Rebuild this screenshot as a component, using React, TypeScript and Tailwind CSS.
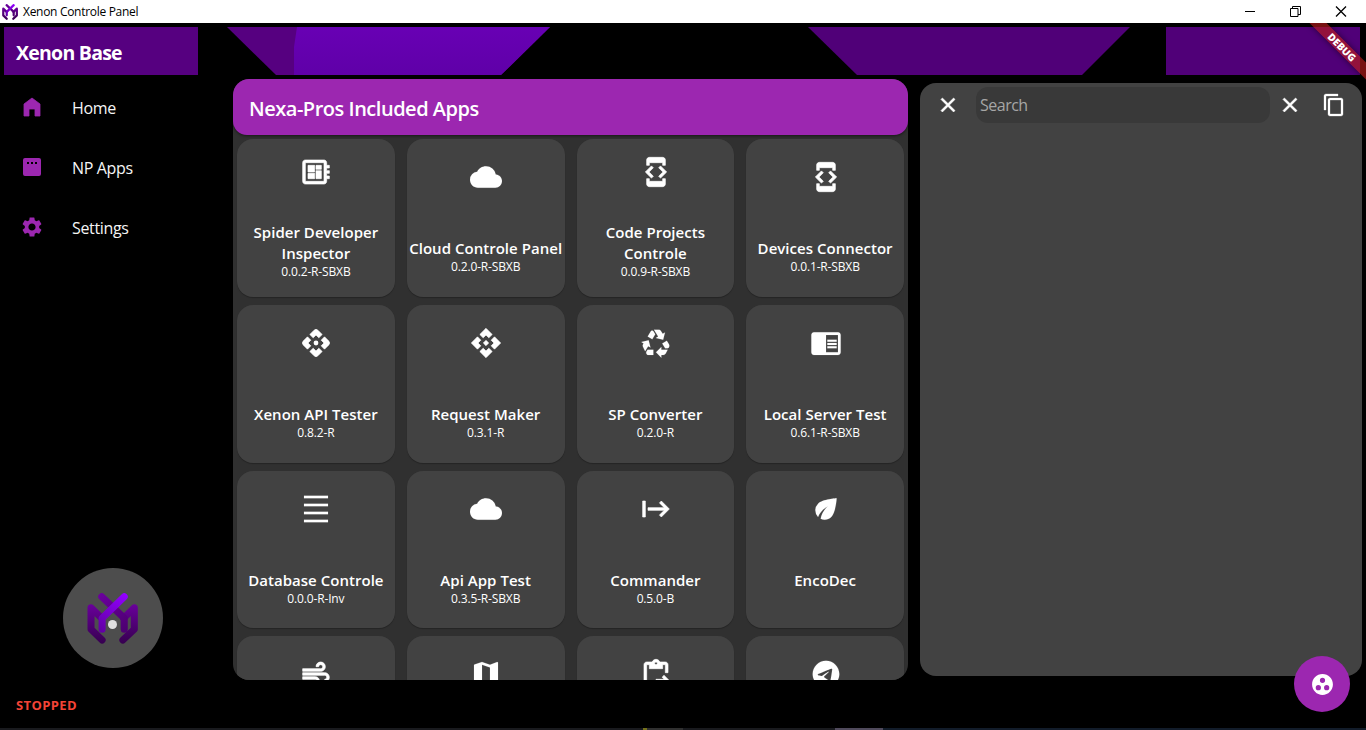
import type { ReactNode } from "react";
import type { IconType } from "react-icons";
import {
  MdAir,
  MdApi,
  MdChromeReaderMode,
  MdClose,
  MdCloud,
  MdContentCopy,
  MdContentPasteGo,
  MdDensitySmall,
  MdDeveloperBoard,
  MdDeveloperMode,
  MdEco,
  MdGroupWork,
  MdHomeFilled,
  MdMap,
  MdRecycling,
  MdSettings,
  MdStart,
} from "react-icons/md";

const TelegramIcon: IconType = ({ size, className }) => (
  <svg width={size} height={size} className={className} viewBox="0 0 24 24" fill="currentColor">
    <path d="M12 2C6.480 2 2 6.480 2 12s4.480 10 10 10 10-4.480 10-10S17.520 2 12 2zm4.640 6.800c-.15 1.580-.8 5.420-1.130 7.190-.14.75-.42 1-.68 1.030-.58.05-1.020-.38-1.580-.75-.88-.58-1.380-.94-2.230-1.500-.99-.65-.35-1.010.22-1.590.15-.15 2.710-2.480 2.760-2.690.01-.03.01-.12-.05-.18s-.14-.04-.21-.02c-.09.02-1.490.95-4.220 2.790-.4.27-.76.41-1.080.4-.36-.01-1.040-.2-1.550-.37-.63-.2-1.120-.31-1.080-.66.02-.18.27-.36.74-.55 2.920-1.270 4.860-2.110 5.830-2.510 2.780-1.160 3.350-1.360 3.730-1.360.08 0 .27.02.39.12.1.08.13.19.14.27-.01.06.01.24 0 .38z" />
  </svg>
);

const RoundedApiIcon: IconType = ({ size, className }) => (
  <svg width={size} height={size} className={className} viewBox="0 0 24 24" fill="currentColor" strokeLinejoin="round">
    <circle cx="12" cy="12" r="1.8" />
    <path d="M12 6l2.120 2.120 2.500-2.500-3.210-3.210a2 2 0 0 0-2.820 0L7.380 5.620l2.500 2.500L12 6zM6 12l2.120-2.120-2.500-2.500-3.210 3.210a2 2 0 0 0 0 2.820l3.210 3.210 2.500-2.500L6 12zM18 12l-2.120 2.120 2.500 2.500 3.210-3.210a2 2 0 0 0 0-2.820l-3.210-3.210-2.500 2.500L18 12zM12 18l-2.120-2.120-2.500 2.500 3.210 3.210a2 2 0 0 0 2.820 0l3.210-3.210-2.500-2.500L12 18z" />
  </svg>
);

type AppEntry = { name: string; version: string; Icon: IconType; bold?: boolean };

const apps: AppEntry[] = [
  { name: "Spider Developer Inspector", version: "0.0.2-R-SBXB", Icon: MdDeveloperBoard, bold: true },
  { name: "Cloud Controle Panel", version: "0.2.0-R-SBXB", Icon: MdCloud },
  { name: "Code Projects Controle", version: "0.0.9-R-SBXB", Icon: MdDeveloperMode, bold: true },
  { name: "Devices Connector", version: "0.0.1-R-SBXB", Icon: MdDeveloperMode, bold: true },
  { name: "Xenon API Tester", version: "0.8.2-R", Icon: RoundedApiIcon, bold: true },
  { name: "Request Maker", version: "0.3.1-R", Icon: MdApi, bold: true },
  { name: "SP Converter", version: "0.2.0-R", Icon: MdRecycling },
  { name: "Local Server Test", version: "0.6.1-R-SBXB", Icon: MdChromeReaderMode },
  { name: "Database Controle", version: "0.0.0-R-Inv", Icon: MdDensitySmall },
  { name: "Api App Test", version: "0.3.5-R-SBXB", Icon: MdCloud },
  { name: "Commander", version: "0.5.0-B", Icon: MdStart, bold: true },
  { name: "EncoDec", version: "", Icon: MdEco },
  { name: "", version: "", Icon: MdAir, bold: true },
  { name: "", version: "", Icon: MdMap },
  { name: "", version: "", Icon: MdContentPasteGo, bold: true },
  { name: "", version: "", Icon: TelegramIcon },
];

function Logo({ className, id }: { className: string; id: string }) {
  return (
    <svg viewBox="260 128 152 152" className={className} fill="none" strokeWidth="21" strokeLinecap="round" strokeLinejoin="round">
      <defs>
        <linearGradient id={`${id}-side`} gradientUnits="userSpaceOnUse" x1="0" y1="160" x2="0" y2="280">
          <stop offset="0" stopColor="#6a009c" />
          <stop offset="1" stopColor="#36004f" />
        </linearGradient>
        <linearGradient id={`${id}-back`} gradientUnits="userSpaceOnUse" x1="300" y1="135" x2="375" y2="240">
          <stop offset="0" stopColor="#6a009c" />
          <stop offset="1" stopColor="#4c0070" />
        </linearGradient>
        <linearGradient id={`${id}-front`} gradientUnits="userSpaceOnUse" x1="375" y1="135" x2="300" y2="240">
          <stop offset="0" stopColor="#9200ff" />
          <stop offset="1" stopColor="#6200a4" />
        </linearGradient>
      </defs>
      <path d="M305 268 272 236V172L304 203" stroke={`url(#${id}-side)`} />
      <path d="M367 268 401 236V172L369 203" stroke={`url(#${id}-side)`} />
      <path d="M304 139 371 203V236" stroke={`url(#${id}-back)`} />
      <path d="M371 139 305 203V236" stroke={`url(#${id}-front)`} />
    </svg>
  );
}

function TitleBar() {
  return (
    <header className="flex h-[23px] shrink-0 items-center justify-between bg-white text-black">
      <div className="flex items-center gap-[5px] pl-0.5">
        <Logo id="small" className="size-4" />
        <span className="text-[12px] leading-[23px] tracking-[-0.3px]">Xenon Controle Panel</span>
      </div>
      <div className="flex h-[21px] items-center gap-[34px] pr-[19px]">
        <svg width="11" height="11" stroke="currentColor"><path d="M0 5.5h10" /></svg>
        <svg width="11" height="11" stroke="currentColor" fill="none"><path d="M.5 2.5h7.500v8H.5zM2.500 2.500v-2h8v8H8" /></svg>
        <svg width="12" height="11" stroke="currentColor" strokeWidth="1.3"><path d="M1 .5l10 10M11 .5l-10 10" /></svg>
      </div>
    </header>
  );
}

function BannerArt() {
  return (
    <svg width="1356" height="48" className="absolute top-1 left-1">
      <defs>
        <linearGradient id="bright" x1="0" y1="0" x2="0" y2="1">
          <stop offset="0" stopColor="#6800b4" />
          <stop offset="1" stopColor="#5f00a8" />
        </linearGradient>
      </defs>
      <path d="M0 0h194v48H0z" fill="#560080" />
      <path d="M223 0h323l-49 48H272z" fill="#560080" />
      <path d="M293 0h253l-49 48H290V20z" fill="url(#bright)" />
      <path d="M804 0h322l-48 48H853z" fill="#500078" />
      <path d="M1162 0h194v48h-194z" fill="#500078" />
    </svg>
  );
}

function NavItem({ icon, label }: { icon: ReactNode; label: string }) {
  return (
    <a className="flex h-[60px] items-center gap-7 pl-5 text-[#9c27b0]">
      {icon}
      <span className="pt-0.5 text-[16px] tracking-[-0.35px] text-[#f5f5f5]">{label}</span>
    </a>
  );
}

function Sidebar() {
  return (
    <aside className="flex w-[229px] shrink-0 flex-col">
      <h1 className="relative flex h-[52px] items-center pt-2 pl-4 text-[19.5px] font-bold tracking-[-0.75px]">
        Xenon Base
      </h1>
      <nav className="pt-[2px]">
        <NavItem
          icon={<MdHomeFilled size={24} className="[&>path:not([fill=none])]:stroke-current [&>path:not([fill=none])]:stroke-[0.8px]" />}
          label="Home"
        />
        <NavItem
          icon={
            <svg width="24" height="24" fill="currentColor" fillRule="evenodd">
              <path d="M5 3h14a2 2 0 0 1 2 2v14a2 2 0 0 1-2 2H5a2 2 0 0 1-2-2V5a2 2 0 0 1 2-2zM7 7v2h2V7zM11 7v2h2V7zM15 7v2h2V7z" />
            </svg>
          }
          label="NP Apps"
        />
        <NavItem icon={<MdSettings size={24} />} label="Settings" />
      </nav>
      <div className="relative mt-auto ml-[62.5px] flex size-[100px] items-center justify-center rounded-full bg-[#4d4d4d]">
        <Logo id="large" className="size-[51px]" />
        <span className="absolute top-[52px] left-[45.5px] size-[9px] rounded-full bg-[#dedede]" />
      </div>
      <p className="mt-[26px] mb-3 pl-4 text-[13px] leading-[22px] font-bold tracking-[0.4px] text-[#f44336]">STOPPED</p>
    </aside>
  );
}

function AppCard({ name, version, Icon, bold }: AppEntry) {
  return (
    <button className="flex h-[157.75px] flex-col items-center justify-around rounded-2xl bg-[#424242] shadow-[0_1px_1px_rgba(0,0,0,0.25)]">
      <Icon
        size={32}
        className={
          bold
            ? "ml-px [&>path:not([fill=none])]:stroke-current [&>path:not([fill=none])]:stroke-[0.5px]"
            : "ml-px [&>path:not([fill=none])]:stroke-current [&>path:not([fill=none])]:stroke-[0.1px]"
        }
      />
      <span className="mt-[0.5px] -mb-[0.5px] flex w-full flex-col">
        <span className="min-h-[21px] text-[15px] leading-[21px] font-semibold tracking-[0.03px]">{name}</span>
        <span className="h-4 text-[12px] leading-4 tracking-[-0.15px]">{version}</span>
      </span>
    </button>
  );
}

function AppsPanel() {
  return (
    <section className="mt-14 ml-1 flex h-[601px] w-[675px] shrink-0 flex-col overflow-hidden rounded-2xl bg-[#303030]">
      <h2 className="z-10 flex h-14 shrink-0 items-center rounded-[14px] bg-[#9c27b0] px-4 pt-1 text-[20px] font-semibold tracking-[-0.48px] shadow-[0_1px_3px_rgba(0,0,0,0.5)]">
        Nexa-Pros Included Apps
      </h2>
      <div className="grid grid-cols-4 gap-x-3 gap-y-2 p-1">
        {apps.map((app, i) => (
          <AppCard key={i} {...app} />
        ))}
      </div>
    </section>
  );
}

function SearchPanel() {
  return (
    <section className="mt-[60px] ml-3 h-[593px] w-[442px] rounded-2xl bg-[#424242] pt-1">
      <div className="flex h-9 items-center">
        <MdClose size={24} className="ml-4 shrink-0 [&>path:not([fill=none])]:stroke-current [&>path:not([fill=none])]:stroke-[0.6px]" />
        <input
          placeholder="Search"
          className="ml-4 h-9 w-[294px] rounded-xl bg-[#393939] px-1 text-[16px] tracking-[-0.5px] placeholder:text-[#a6a6a6]"
        />
        <MdClose size={24} className="ml-2 shrink-0 [&>path:not([fill=none])]:stroke-current [&>path:not([fill=none])]:stroke-[0.6px]" />
        <MdContentCopy size={24} className="ml-5 shrink-0 [&>path:not([fill=none])]:stroke-current [&>path:not([fill=none])]:stroke-[0.3px]" />
      </div>
    </section>
  );
}

export default function App() {
  return (
    <div className="flex h-[730px] w-[1366px] flex-col overflow-hidden bg-black font-['Open_Sans','Noto_Sans',sans-serif] text-white">
      <TitleBar />
      <main className="relative flex h-[705px] shrink-0">
        <BannerArt />
        <Sidebar />
        <AppsPanel />
        <SearchPanel />
        <button className="absolute top-[633px] left-[1294px] flex size-14 items-center justify-center rounded-full bg-[#9c27b0]">
          <MdGroupWork size={25} />
        </button>
        <div className="absolute top-0 right-0 size-[60px] overflow-hidden">
          <div className="absolute top-[18px] -left-1 h-3 w-20 rotate-45 bg-[#b71c1c]/65 text-center text-[10.2px] leading-3 font-black shadow-[0_0_6px_rgba(0,0,0,0.5)]">
            DEBUG
          </div>
        </div>
      </main>
      <footer className="flex h-0.5 bg-[#191a1e]">
        <span className="ml-[643px] w-1 bg-[#75721c]" />
        <span className="w-9 bg-[#303030]" />
        <span className="ml-[152px] w-12 bg-[#504a5c]" />
        <span className="grow bg-[#121c2a]" />
      </footer>
    </div>
  );
}
